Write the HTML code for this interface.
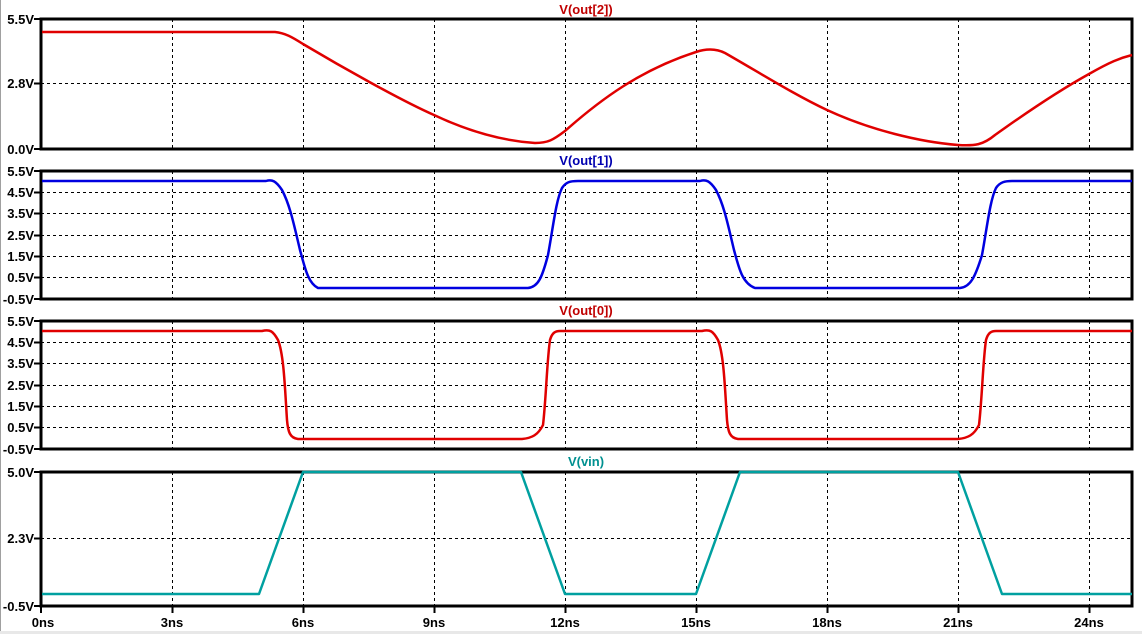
<!DOCTYPE html>
<html><head><meta charset="utf-8"><style>
html,body{margin:0;padding:0;background:#fff;}
svg{display:block;}
text{font-family:"Liberation Sans",sans-serif;font-weight:bold;font-size:13px;}
</style></head><body>
<svg width="1142" height="634" viewBox="0 0 1142 634" xmlns="http://www.w3.org/2000/svg">
<rect x="0" y="0" width="1142" height="634" fill="#fff"/>
<rect x="0" y="0" width="1" height="634" fill="#a0a0a0"/>
<rect x="0" y="631" width="1142" height="3" fill="#e8e8e8"/>
<g stroke="#000" stroke-width="1" stroke-dasharray="3,3" fill="none">
<path d="M172.5 19V149M303.5 19V149M434.5 19V149M565.5 19V149M696.5 19V149M827.5 19V149M958.5 19V149M1089.5 19V149"/>
<path d="M172.5 171V299M303.5 171V299M434.5 171V299M565.5 171V299M696.5 171V299M827.5 171V299M958.5 171V299M1089.5 171V299"/>
<path d="M172.5 321V449M303.5 321V449M434.5 321V449M565.5 321V449M696.5 321V449M827.5 321V449M958.5 321V449M1089.5 321V449"/>
<path d="M172.5 472V606M303.5 472V606M434.5 472V606M565.5 472V606M696.5 472V606M827.5 472V606M958.5 472V606M1089.5 472V606"/>
<path d="M41 83.5H1132"/>
<path d="M41 192.5H1132M41 213.5H1132M41 235.5H1132M41 256.5H1132M41 277.5H1132"/>
<path d="M41 342.5H1132M41 363.5H1132M41 385.5H1132M41 406.5H1132M41 427.5H1132"/>
<path d="M41 538.5H1132"/>
</g>
<g stroke="#000" stroke-width="3" fill="none">
<rect x="41" y="19" width="1091" height="130"/>
<rect x="41" y="171" width="1091" height="128"/>
<rect x="41" y="321" width="1091" height="128"/>
<rect x="41" y="472" width="1091" height="134"/>
</g>
<g stroke="#000" stroke-width="2">
<path d="M34 19H41M34 83.5H41M34 149H41"/>
<path d="M34 171H41M34 192.5H41M34 213.5H41M34 235.5H41M34 256.5H41M34 277.5H41M34 299H41"/>
<path d="M34 321H41M34 342.5H41M34 363.5H41M34 385.5H41M34 406.5H41M34 427.5H41M34 449H41"/>
<path d="M34 472H41M34 538.5H41M34 606H41"/>
<path d="M41 606V613M172.5 606V613M303.5 606V613M434.5 606V613M565.5 606V613M696.5 606V613M827.5 606V613M958.5 606V613M1089.5 606V613"/>
</g>
<g text-anchor="end" fill="#000">
<text x="34" y="24">5.5V</text><text x="34" y="88">2.8V</text><text x="34" y="154">0.0V</text>
<text x="34" y="176">5.5V</text><text x="34" y="197">4.5V</text><text x="34" y="218">3.5V</text><text x="34" y="240">2.5V</text><text x="34" y="261">1.5V</text><text x="34" y="282">0.5V</text><text x="34" y="304">-0.5V</text>
<text x="34" y="326">5.5V</text><text x="34" y="347">4.5V</text><text x="34" y="368">3.5V</text><text x="34" y="390">2.5V</text><text x="34" y="411">1.5V</text><text x="34" y="432">0.5V</text><text x="34" y="454">-0.5V</text>
<text x="34" y="477">5.0V</text><text x="34" y="543">2.3V</text><text x="34" y="611">-0.5V</text>
</g>
<g text-anchor="middle" fill="#000">
<text x="43" y="627">0ns</text><text x="172" y="627">3ns</text><text x="303" y="627">6ns</text><text x="434" y="627">9ns</text><text x="565" y="627">12ns</text><text x="696" y="627">15ns</text><text x="827" y="627">18ns</text><text x="958" y="627">21ns</text><text x="1089" y="627">24ns</text>
</g>
<text x="586" y="14" text-anchor="middle" fill="#c00000">V(out[2])</text>
<text x="586" y="165" text-anchor="middle" fill="#0000b0">V(out[1])</text>
<text x="586" y="315" text-anchor="middle" fill="#c00000">V(out[0])</text>
<text x="586" y="466" text-anchor="middle" fill="#009090">V(vin)</text>
<g fill="none" stroke-width="2.5" stroke-linejoin="round">
<path stroke="#e00000" d="M42 32H275C285 33 292 37 303 44C340 66 400 100 434 115C470 132 505 141 535 143C548 143 553 140 565 131C600 100 640 70 696 52C705 49 715 48 725 53C760 73 795 95 827 110C870 130 920 142 958 145C975 146 983 145 995 135C1030 110 1060 90 1089 74C1110 62 1120 58 1132 55"/>
<path stroke="#0000e0" d="M42 181H266C272 179 276 181 282 190C290 205 294 225 300 250C305 268 308 283 318 288H528C538 287 542 278 548 255C553 228 556 200 562 188C566 182 570 181 578 181H700C706 179 710 181 716 190C724 205 728 225 734 250C739 268 742 283 755 288H960C970 287 975 278 982 255C987 228 990 200 996 188C1000 182 1005 181 1012 181H1132"/>
<path stroke="#e00000" d="M42 331H262C270 329 273 331 278 340C284 355 285 390 287 420C288 432 290 438 298 439H522C532 438 538 435 543 425C546 400 547 360 550 340C552 333 555 331 560 331H702C710 329 713 331 718 340C724 355 725 390 727 420C728 432 730 438 738 439H958C968 438 974 435 979 425C982 400 983 360 986 340C988 333 991 331 996 331H1132"/>
<path stroke="#00a0a0" d="M42 594H259L303 472H521L565 594H696L740 472H958L1002 594H1132"/>
</g>
</svg>
</body></html>
